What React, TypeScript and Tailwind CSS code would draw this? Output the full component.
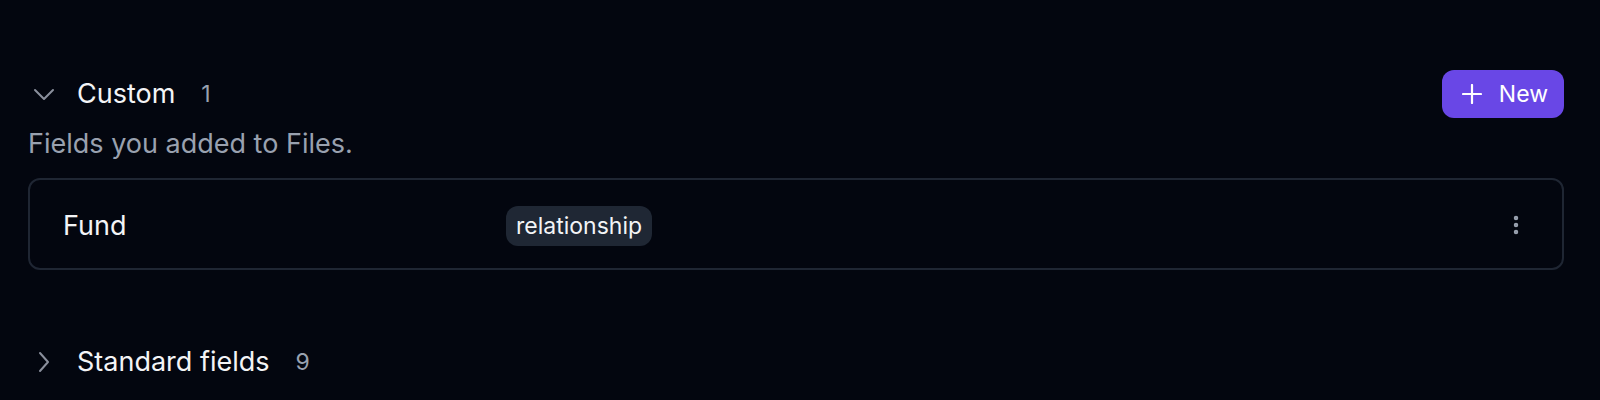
import { MoreVertical } from "lucide-react";

type Field = {
  name: string;
  kind: string;
};

const customFields: Field[] = [{ name: "Fund", kind: "relationship" }];

function Chevron({ open }: { open: boolean }) {
  return (
    <svg
      width="24"
      height="24"
      viewBox="0 0 24 24"
      fill="none"
      stroke="#8a8f9c"
      strokeWidth="2"
      strokeLinecap="round"
      strokeLinejoin="round"
      className="shrink-0"
    >
      {open ? <polyline points="3 8 12 17 21 8" /> : <polyline points="8 3 16 12 8 21" />}
    </svg>
  );
}

function PlusIcon() {
  return (
    <svg width="20" height="20" viewBox="0 0 20 20" fill="none" stroke="currentColor" strokeWidth="2.2" strokeLinecap="round">
      <path d="M1 10h18M10 1v18" />
    </svg>
  );
}

function SectionHeader({ title, count, open }: { title: string; count: number; open: boolean }) {
  return (
    <div className="flex h-12 items-center">
      <div className="ml-[4px] flex w-[24px] items-center justify-center">
        <Chevron open={open} />
      </div>
      <span className="ml-[21px] text-[27px] text-gray-100">{title}</span>
      <span className="ml-[26px] text-[23px] text-gray-400">{count}</span>
    </div>
  );
}

export default function App() {
  return (
    <div
      className="min-h-[400px] bg-[#03060f] pl-[28px] pr-[36px] pt-[70px] text-gray-100"
      style={{ fontFamily: "Inter, 'Noto Sans', sans-serif" }}
    >
      <section>
        <div className="flex items-center justify-between">
          <SectionHeader title="Custom" count={customFields.length} open />
          <button className="flex h-12 items-center gap-[17px] rounded-xl bg-[#6947e6] pl-[20px] pr-[16px] text-[23px] text-white">
            <PlusIcon />
            New
          </button>
        </div>
        <p className="mt-[8px] text-[27px] leading-[36px] text-gray-400">Fields you added to Files.</p>
        <div className="mt-[16px] rounded-xl border-2 border-[#1f2633]">
          {customFields.map((f) => (
            <div key={f.name} className="flex h-[88px] items-center pl-[33px] pr-[34px]">
              <span className="mt-[4px] w-[443px] text-[27px] text-gray-100">{f.name}</span>
              <span className="mt-[4px] rounded-xl bg-[#1f2734] px-[10px] py-[4px] text-[23px] leading-[32px] text-gray-100">
                {f.kind}
              </span>
              <div className="ml-auto mt-[2px] text-gray-400">
                <MoreVertical size={24} strokeWidth={2.5} />
              </div>
            </div>
          ))}
        </div>
      </section>
      <section className="mt-[68px]">
        <SectionHeader title="Standard fields" count={9} open={false} />
      </section>
    </div>
  );
}
